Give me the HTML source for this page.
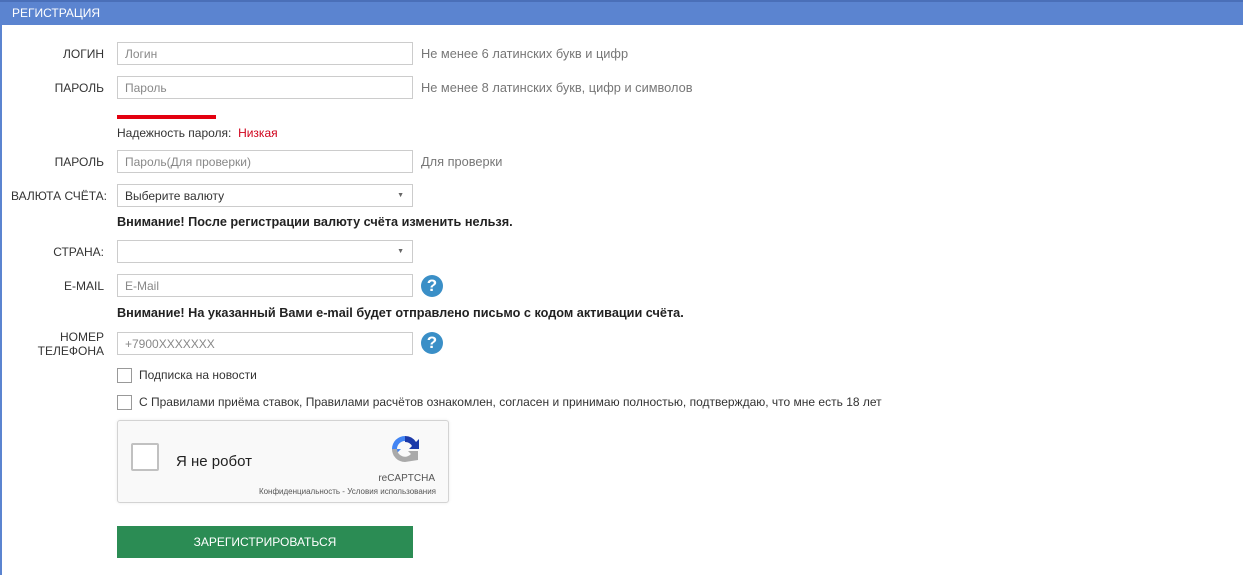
<!DOCTYPE html>
<html><head><meta charset="utf-8"><style>
body{margin:0;width:1243px;height:575px;background:#fff;font-family:"Liberation Sans",Tahoma,sans-serif;font-size:12px;color:#333;position:relative;overflow:hidden}
.a{position:absolute}
.hdr{left:0;top:0;width:1243px;height:25px;background:#5b84d0;border-top:2px solid #4a6fb8;box-sizing:border-box;color:#fff;font-size:12px;line-height:23px;padding-left:12px}
.lb{width:104px;text-align:right;left:0}
.in{left:117px;width:296px;height:23px;border:1px solid #ccc;box-sizing:border-box;color:#888;line-height:22px;padding-left:7px}
.hint{left:421px;color:#777;font-size:12.8px}
.q{width:22px;height:22px;border-radius:50%;background:#3a8fc7;color:#fff;font-weight:bold;font-size:17px;text-align:center;line-height:22px;left:421px}
.cb{left:117px;width:13px;height:13px;border:1px solid #999;background:#fff}
.arr{right:8px;top:0;font-size:7px;color:#666}
.warn{left:117px;font-weight:bold;color:#222;font-size:12.7px}
</style></head><body>
<div class="a" style="left:0;top:0;width:2px;height:575px;background:#5b84d0"></div>
<div class="a hdr">РЕГИСТРАЦИЯ</div>

<div class="a lb" style="top:47px">ЛОГИН</div>
<div class="a in" style="top:42px">Логин</div>
<div class="a hint" style="top:46px">Не менее 6 латинских букв и цифр</div>

<div class="a lb" style="top:81px">ПАРОЛЬ</div>
<div class="a in" style="top:76px">Пароль</div>
<div class="a hint" style="top:80px">Не менее 8 латинских букв, цифр и символов</div>

<div class="a" style="left:117px;top:115px;width:99px;height:4px;background:#e3000f"></div>
<div class="a" style="left:117px;top:126px">Надежность пароля: &nbsp;<span style="color:#d0021b">Низкая</span></div>

<div class="a lb" style="top:155px">ПАРОЛЬ</div>
<div class="a in" style="top:150px">Пароль(Для проверки)</div>
<div class="a hint" style="top:154px">Для проверки</div>

<div class="a lb" style="top:189px;left:3px">ВАЛЮТА СЧЁТА:</div>
<div class="a in" style="top:184px;color:#333">Выберите валюту<span class="a arr">▼</span></div>
<div class="a warn" style="top:215px">Внимание! После регистрации валюту счёта изменить нельзя.</div>

<div class="a lb" style="top:245px">СТРАНА:</div>
<div class="a in" style="top:240px"><span class="a arr">▼</span></div>

<div class="a lb" style="top:279px">E-MAIL</div>
<div class="a in" style="top:274px">E-Mail</div>
<div class="a q" style="top:275px">?</div>
<div class="a warn" style="top:306px">Внимание! На указанный Вами e-mail будет отправлено письмо с кодом активации счёта.</div>

<div class="a lb" style="top:330px;line-height:14px">НОМЕР<br>ТЕЛЕФОНА</div>
<div class="a in" style="top:332px">+7900XXXXXXX</div>
<div class="a q" style="top:332px">?</div>

<div class="a cb" style="top:368px"></div>
<div class="a" style="left:139px;top:368px">Подписка на новости</div>
<div class="a cb" style="top:395px"></div>
<div class="a" style="left:139px;top:395px">С Правилами приёма ставок, Правилами расчётов ознакомлен, согласен и принимаю полностью, подтверждаю, что мне есть 18 лет</div>

<div class="a" style="left:117px;top:420px;width:332px;height:83px;border:1px solid #d3d3d3;border-radius:3px;background:#f9f9f9;box-sizing:border-box;box-shadow:0 0 3px rgba(0,0,0,.08)">
 <div class="a" style="left:13px;top:22px;width:28px;height:28px;border:2px solid #c1c1c1;border-radius:2px;background:#fff;box-sizing:border-box"></div>
 <div class="a" style="left:58px;top:32px;font-size:15px;color:#222">Я не робот</div>
 <svg class="a" style="left:270px;top:11px" width="34" height="34" viewBox="0 0 34 34">
  <path d="M17 4a13 13 0 0 1 11 6l3-3v10h-10l3-3a8 8 0 0 0-7-4z" fill="#1c3aa9"/>
  <path d="M4 17a13 13 0 0 1 13-13v5a8 8 0 0 0-8 8h4l-7 7z" fill="#4285f4"/>
  <path d="M17 30a13 13 0 0 1-13-13h5a8 8 0 0 0 14 5l-3-3h10v9z" fill="#aaa"/>
 </svg>
 <div class="a" style="right:13px;top:52px;font-size:10px;color:#555">reCAPTCHA</div>
 <div class="a" style="right:12px;top:66px;font-size:8px;color:#555">Конфиденциальность - Условия использования</div>
</div>

<div class="a" style="left:117px;top:526px;width:296px;height:32px;background:#2b8c54;color:#fff;text-align:center;line-height:32px;font-size:12px">ЗАРЕГИСТРИРОВАТЬСЯ</div>
</body></html>
